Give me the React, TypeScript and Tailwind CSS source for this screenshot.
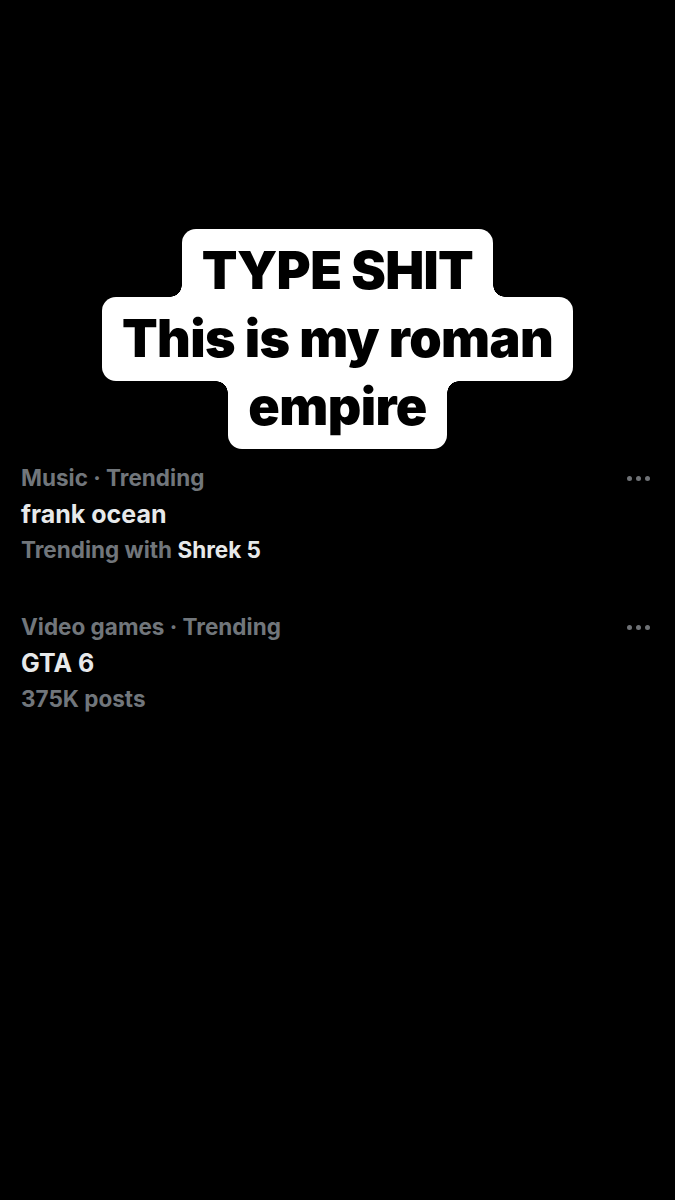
import type { ReactNode } from "react"

const lines = [
  { text: "TYPE SHIT", notch: "bottom" },
  { text: "This is my roman", notch: "none" },
  { text: "empire", notch: "top" },
]

const trends: { topic: string; title: string; meta: ReactNode }[] = [
  {
    topic: "Music · Trending",
    title: "frank ocean",
    meta: (
      <>
        Trending with <span className="text-[#e7e9ea]">Shrek 5</span>
      </>
    ),
  },
  {
    topic: "Video games · Trending",
    title: "GTA 6",
    meta: <>375K posts</>,
  },
]

const Dots = () => (
  <div className="flex items-center gap-[4px]">
    <span className="block w-[5px] h-[5px] rounded-full bg-[#6f7276]" />
    <span className="block w-[5px] h-[5px] rounded-full bg-[#6f7276]" />
    <span className="block w-[5px] h-[5px] rounded-full bg-[#6f7276]" />
  </div>
)

export default function App() {
  return (
    <div className="w-full h-[1200px] bg-black overflow-hidden font-['Inter',sans-serif]">
      {/* caption, one white pill per line */}
      <div className="pt-[237px] flex flex-col items-center">
        {lines.map((line) => (
          <div
            key={line.text}
            className="relative bg-white rounded-[14px] px-5 py-2 -my-2 h-[84px] box-border"
          >
            {line.notch === "bottom" && (
              <>
                <span className="absolute left-[-12px] bottom-[16px] w-3 h-3 bg-[radial-gradient(circle_at_0_0,transparent_11.5px,white_12px)]" />
                <span className="absolute right-[-12px] bottom-[16px] w-3 h-3 bg-[radial-gradient(circle_at_100%_0,transparent_11.5px,white_12px)]" />
              </>
            )}
            {line.notch === "top" && (
              <>
                <span className="absolute left-[-12px] top-[16px] w-3 h-3 bg-[radial-gradient(circle_at_0_100%,transparent_11.5px,white_12px)]" />
                <span className="absolute right-[-12px] top-[16px] w-3 h-3 bg-[radial-gradient(circle_at_100%_100%,transparent_11.5px,white_12px)]" />
              </>
            )}
            <span className="relative z-10 block h-[68px] leading-[68px] text-[52px] font-black text-black tracking-[-0.6px] whitespace-nowrap">
              {line.text}
            </span>
          </div>
        ))}
      </div>

      {/* trends */}
      <div className="mt-[19px] flex flex-col gap-[41px]">
        {trends.map((t) => (
          <div key={t.title} className="flex justify-between pl-[21px] pr-[25px]">
            <div className="flex flex-col font-bold leading-[36px]">
              <span className="text-[22.5px] text-[#71767b]">{t.topic}</span>
              <span className="text-[25px] font-bold text-[#e7e9ea]">{t.title}</span>
              <span className="text-[22.5px] text-[#71767b]">{t.meta}</span>
            </div>
            <div className="h-[36px] flex items-center">
              <Dots />
            </div>
          </div>
        ))}
      </div>
    </div>
  )
}
